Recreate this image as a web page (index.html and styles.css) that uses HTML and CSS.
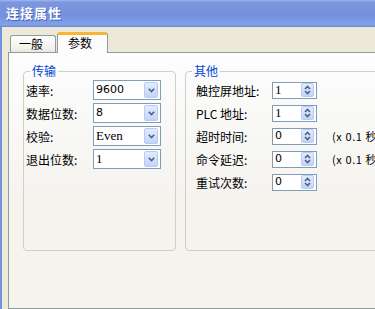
FILE: index.html
```html
<!DOCTYPE html>
<html lang="zh">

<head>
    <meta charset="UTF-8">
    <title>连接属性</title>
    <link rel="stylesheet" href="styles.css">
</head>

<body>
    <div class="window">
        <div class="titlebar">连接属性</div>
        <div class="frame">
            <div class="tabs">
                <div class="tab">一般</div>
                <div class="tab active">参数</div>
            </div>
            <div class="page">
                <fieldset class="group group-left">
                    <legend>传输</legend>
                    <div class="rows">
                        <div class="row">
                            <span class="lbl">速率:</span>
                            <div class="combo"><span class="val num">9600</span><span class="drop"><svg width="7" height="5" viewBox="0 0 7 5"><path d="M0.8 0.8 L3.5 3.6 L6.2 0.8" /></svg></span></div>
                        </div>
                        <div class="row">
                            <span class="lbl">数据位数:</span>
                            <div class="combo"><span class="val num">8</span><span class="drop"><svg width="7" height="5" viewBox="0 0 7 5"><path d="M0.8 0.8 L3.5 3.6 L6.2 0.8" /></svg></span></div>
                        </div>
                        <div class="row">
                            <span class="lbl">校验:</span>
                            <div class="combo"><span class="val serif">Even</span><span class="drop"><svg width="7" height="5" viewBox="0 0 7 5"><path d="M0.8 0.8 L3.5 3.6 L6.2 0.8" /></svg></span></div>
                        </div>
                        <div class="row">
                            <span class="lbl">退出位数:</span>
                            <div class="combo"><span class="val serif">1</span><span class="drop"><svg width="7" height="5" viewBox="0 0 7 5"><path d="M0.8 0.8 L3.5 3.6 L6.2 0.8" /></svg></span></div>
                        </div>
                    </div>
                </fieldset>

                <fieldset class="group group-right">
                    <legend>其他</legend>
                    <div class="rows">
                        <div class="row">
                            <span class="lbl wide">触控屏地址:</span>
                            <div class="spin"><span class="val serif">1</span><span class="arrows"><svg width="7" height="10" viewBox="0 0 7 10"><path d="M1 4 L3.5 1.5 L6 4 M1 6 L3.5 8.5 L6 6" /></svg></span></div>
                        </div>
                        <div class="row">
                            <span class="lbl wide">PLC 地址:</span>
                            <div class="spin"><span class="val serif">1</span><span class="arrows"><svg width="7" height="10" viewBox="0 0 7 10"><path d="M1 4 L3.5 1.5 L6 4 M1 6 L3.5 8.5 L6 6" /></svg></span></div>
                        </div>
                        <div class="row">
                            <span class="lbl wide">超时时间:</span>
                            <div class="spin"><span class="val num">0</span><span class="arrows"><svg width="7" height="10" viewBox="0 0 7 10"><path d="M1 4 L3.5 1.5 L6 4 M1 6 L3.5 8.5 L6 6" /></svg></span></div>
                            <span class="unit">(x 0.1 秒)</span>
                        </div>
                        <div class="row">
                            <span class="lbl wide">命令延迟:</span>
                            <div class="spin"><span class="val num">0</span><span class="arrows"><svg width="7" height="10" viewBox="0 0 7 10"><path d="M1 4 L3.5 1.5 L6 4 M1 6 L3.5 8.5 L6 6" /></svg></span></div>
                            <span class="unit">(x 0.1 秒)</span>
                        </div>
                        <div class="row">
                            <span class="lbl wide">重试次数:</span>
                            <div class="spin"><span class="val num">0</span><span class="arrows"><svg width="7" height="10" viewBox="0 0 7 10"><path d="M1 4 L3.5 1.5 L6 4 M1 6 L3.5 8.5 L6 6" /></svg></span></div>
                        </div>
                    </div>
                </fieldset>
            </div>
        </div>
    </div>
</body>

</html>
```

FILE: styles.css
```css
* {
    margin: 0;
    padding: 0;
    box-sizing: border-box;
}

body {
    width: 375px;
    height: 309px;
    overflow: hidden;
    font-family: "Noto Sans CJK SC", "DejaVu Sans", sans-serif;
    font-size: 12px;
    color: #000;
    background: #ece9d8;
}

.window {
    height: 309px;
    display: flex;
    flex-direction: column;
}

.titlebar {
    height: 27px;
    padding-left: 6px;
    line-height: 26px;
    color: #fff;
    font-size: 13px;
    font-weight: bold;
    letter-spacing: 1px;
    text-shadow: 1px 1px 0 #4a64b8;
    background: linear-gradient(#a2b8ee 0, #7c97de 2px, #7590dc 60%, #80a3ea 92%, #6d84cc 100%);
}

.frame {
    flex: 1;
    display: flex;
    flex-direction: column;
    background: #ece9d8;
    border-left: 2px solid #7590dc;
    padding: 5px 0 0 6px;
}

/* tab strip */
.tabs {
    height: 20px;
    display: flex;
    align-items: flex-end;
    padding-left: 2px;
}

.tab {
    width: 46px;
    height: 17px;
    border: 1px solid #919b9c;
    border-bottom: none;
    border-radius: 3px 3px 0 0;
    background: linear-gradient(#ffffff, #f3f2ee 70%, #e9e7e0);
    text-align: center;
    line-height: 16px;
    padding-right: 4px;
}

.tab.active {
    width: 51px;
    height: 21px;
    margin-left: 1px;
    margin-bottom: -1px;
    position: relative;
    border-top: 3px solid #f7b636;
    background: #fcfcfe;
    line-height: 16px;
    padding-right: 5px;
}

/* tab page */
.page {
    flex: 1;
    display: flex;
    gap: 9px;
    border: 1px solid #919b9c;
    border-right: none;
    background: linear-gradient(#fdfdfe, #f4f3ee 60%);
    padding: 10px 0 0 14px;
}

.group {
    height: 188px;
    border: 1px solid #d0d0bf;
    border-radius: 4px;
    padding: 0;
}

.group-left {
    width: 153px;
    flex: none;
}

.group-right {
    width: 240px;
    flex: none;
}

legend {
    margin-left: 6px;
    padding: 0 2px;
    line-height: 16px;
    color: #0046d5;
}

.rows {
    display: flex;
    flex-direction: column;
    gap: 3px;
    margin-top: 1px;
}

.group-left .rows {
    padding-left: 2px;
}

.group-right .rows {
    padding-left: 10px;
}

.row {
    height: 20px;
    display: flex;
    align-items: center;
}

.lbl {
    width: 67px;
    flex: none;
}

.lbl.wide {
    width: 76px;
}

.val {
    flex: 1;
    padding-left: 2px;
    line-height: 16px;
}

.num {
    font-family: "DejaVu Sans", sans-serif;
    font-size: 11px;
}

.serif {
    font-family: "Liberation Serif", serif;
    font-size: 13px;
}

.combo {
    width: 68px;
    height: 20px;
    display: flex;
    align-items: center;
    border: 1px solid #7f9db9;
    background: #fff;
    padding-right: 2px;
}

.drop,
.arrows {
    display: flex;
    align-items: center;
    justify-content: center;
    border: 1px solid #b9cbf4;
    border-radius: 2px;
    background: linear-gradient(#e3ebfe, #c3d4fa);
}

.drop {
    width: 14px;
    height: 16px;
}

.arrows {
    width: 13px;
    height: 14px;
    margin-right: 2px;
}

.drop path,
.arrows path {
    fill: none;
    stroke: #4d6185;
    stroke-width: 1.6;
}

.spin {
    width: 45px;
    height: 17px;
    display: flex;
    align-items: center;
    border: 1px solid #7f9db9;
    background: #fff;
}

.unit {
    margin-left: 15px;
    font-size: 11px;
    letter-spacing: 0.6px;
    white-space: nowrap;
}
```
